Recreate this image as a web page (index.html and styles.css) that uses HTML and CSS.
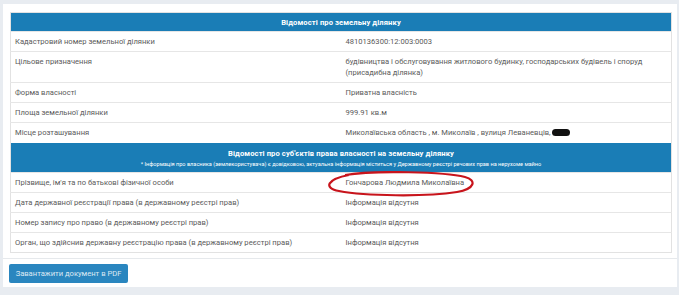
FILE: index.html
```html
<!DOCTYPE html>
<html lang="uk">
<head>
<meta charset="utf-8">
<link rel="stylesheet" href="styles.css">
</head>
<body>
<div class="card">
  <div class="card-body">
    <table class="info">
      <tr class="head"><th colspan="2">Відомості про земельну ділянку</th></tr>
      <tr><td class="lbl">Кадастровий номер земельної ділянки</td><td>4810136300:12:003:0003</td></tr>
      <tr class="tall"><td class="lbl">Цільове призначення</td><td>будівництва і обслуговування житлового будинку, господарських будівель і споруд (присадибна ділянка)</td></tr>
      <tr><td class="lbl">Форма власності</td><td>Приватна власність</td></tr>
      <tr><td class="lbl">Площа земельної ділянки</td><td>999.91 кв.м</td></tr>
      <tr><td class="lbl">Місце розташування</td><td>Миколаївська область , м. Миколаїв , вулиця Леваневців, <span class="redact"></span></td></tr>
      <tr class="head head2"><th colspan="2">Відомості про суб'єктів права власності на земельну ділянку<div class="note">* Інформація про власника (землекористувача) є довідковою, актуальна інформація міститься у Державному реєстрі речових прав на нерухоме майно</div></th></tr>
      <tr><td class="lbl">Прізвище, ім'я та по батькові фізичної особи</td><td class="name-cell">Гончарова Людмила Миколаївна<svg class="circle" viewBox="0 0 152 26" width="152" height="26"><path d="M20 4 C50 -1 120 1 140 6 C152 9 150 18 132 21 C100 26 40 25 14 20 C-2 17 2 8 24 4" fill="none" stroke="#c8141c" stroke-width="2.2"/></svg></td></tr>
      <tr><td class="lbl">Дата державної реєстрації права (в державному реєстрі прав)</td><td>Інформація відсутня</td></tr>
      <tr><td class="lbl">Номер запису про право (в державному реєстрі прав)</td><td>Інформація відсутня</td></tr>
      <tr><td class="lbl">Орган, що здійснив державну реєстрацію права (в державному реєстрі прав)</td><td>Інформація відсутня</td></tr>
    </table>
  </div>
  <div class="card-footer">
    <button class="btn">Завантажити документ в PDF</button>
  </div>
</div>
</body>
</html>
```
FILE: styles.css
```css
html, body {
  margin: 0;
  padding: 0;
  background: #e8ecf1;
}
body {
  padding: 4px 2px 0 3px;
  font-family: Roboto, "Liberation Sans", Arial, sans-serif;
  font-size: 7.6px;
  color: #5a5a5a;
}
.card {
  width: 674px;
  height: 283px;
  background: #fff;
  box-sizing: border-box;
}
.card-body {
  padding: 8px 5px 5px 7px;
  border-bottom: 1px solid #e6e9ec;
}
.info {
  width: 662px;
  border-collapse: collapse;
  border: 1px solid #e2e2e2;
}
.info th {
  background: #1a7db6;
  color: #fff;
  font-weight: bold;
  font-size: 7.6px;
  height: 19px;
  padding: 0;
  text-align: center;
  letter-spacing: 0.1px;
  box-sizing: border-box;
}
.head2 th {
  height: 30px;
  vertical-align: top;
  padding-top: 6px;
}
.note {
  font-weight: normal;
  font-size: 5.6px;
  margin-top: 3px;
  letter-spacing: 0;
}
.info td {
  height: 20px;
  padding: 0 4px;
  border-top: 1px solid #e6e6e6;
  vertical-align: top;
  line-height: 19px;
  box-sizing: border-box;
}
.info td.lbl {
  width: 331px;
}
.info tr.tall td {
  height: 31px;
  line-height: 11px;
  padding-top: 4px;
}
.redact {
  display: inline-block;
  width: 18px;
  height: 7px;
  background: #111;
  border-radius: 4px;
  vertical-align: -1px;
}
.name-cell {
  position: relative;
}
.circle {
  position: absolute;
  left: -17px;
  top: -2px;
}
.card-footer {
  padding: 5px 0 0 6px;
}
.btn {
  background: #2a86bf;
  color: #dde9f3;
  border: none;
  border-radius: 2px;
  font-family: Roboto, "Liberation Sans", Arial, sans-serif;
  font-size: 7.6px;
  height: 19px;
  width: 119px;
  padding: 0;
  white-space: nowrap;
}
```
